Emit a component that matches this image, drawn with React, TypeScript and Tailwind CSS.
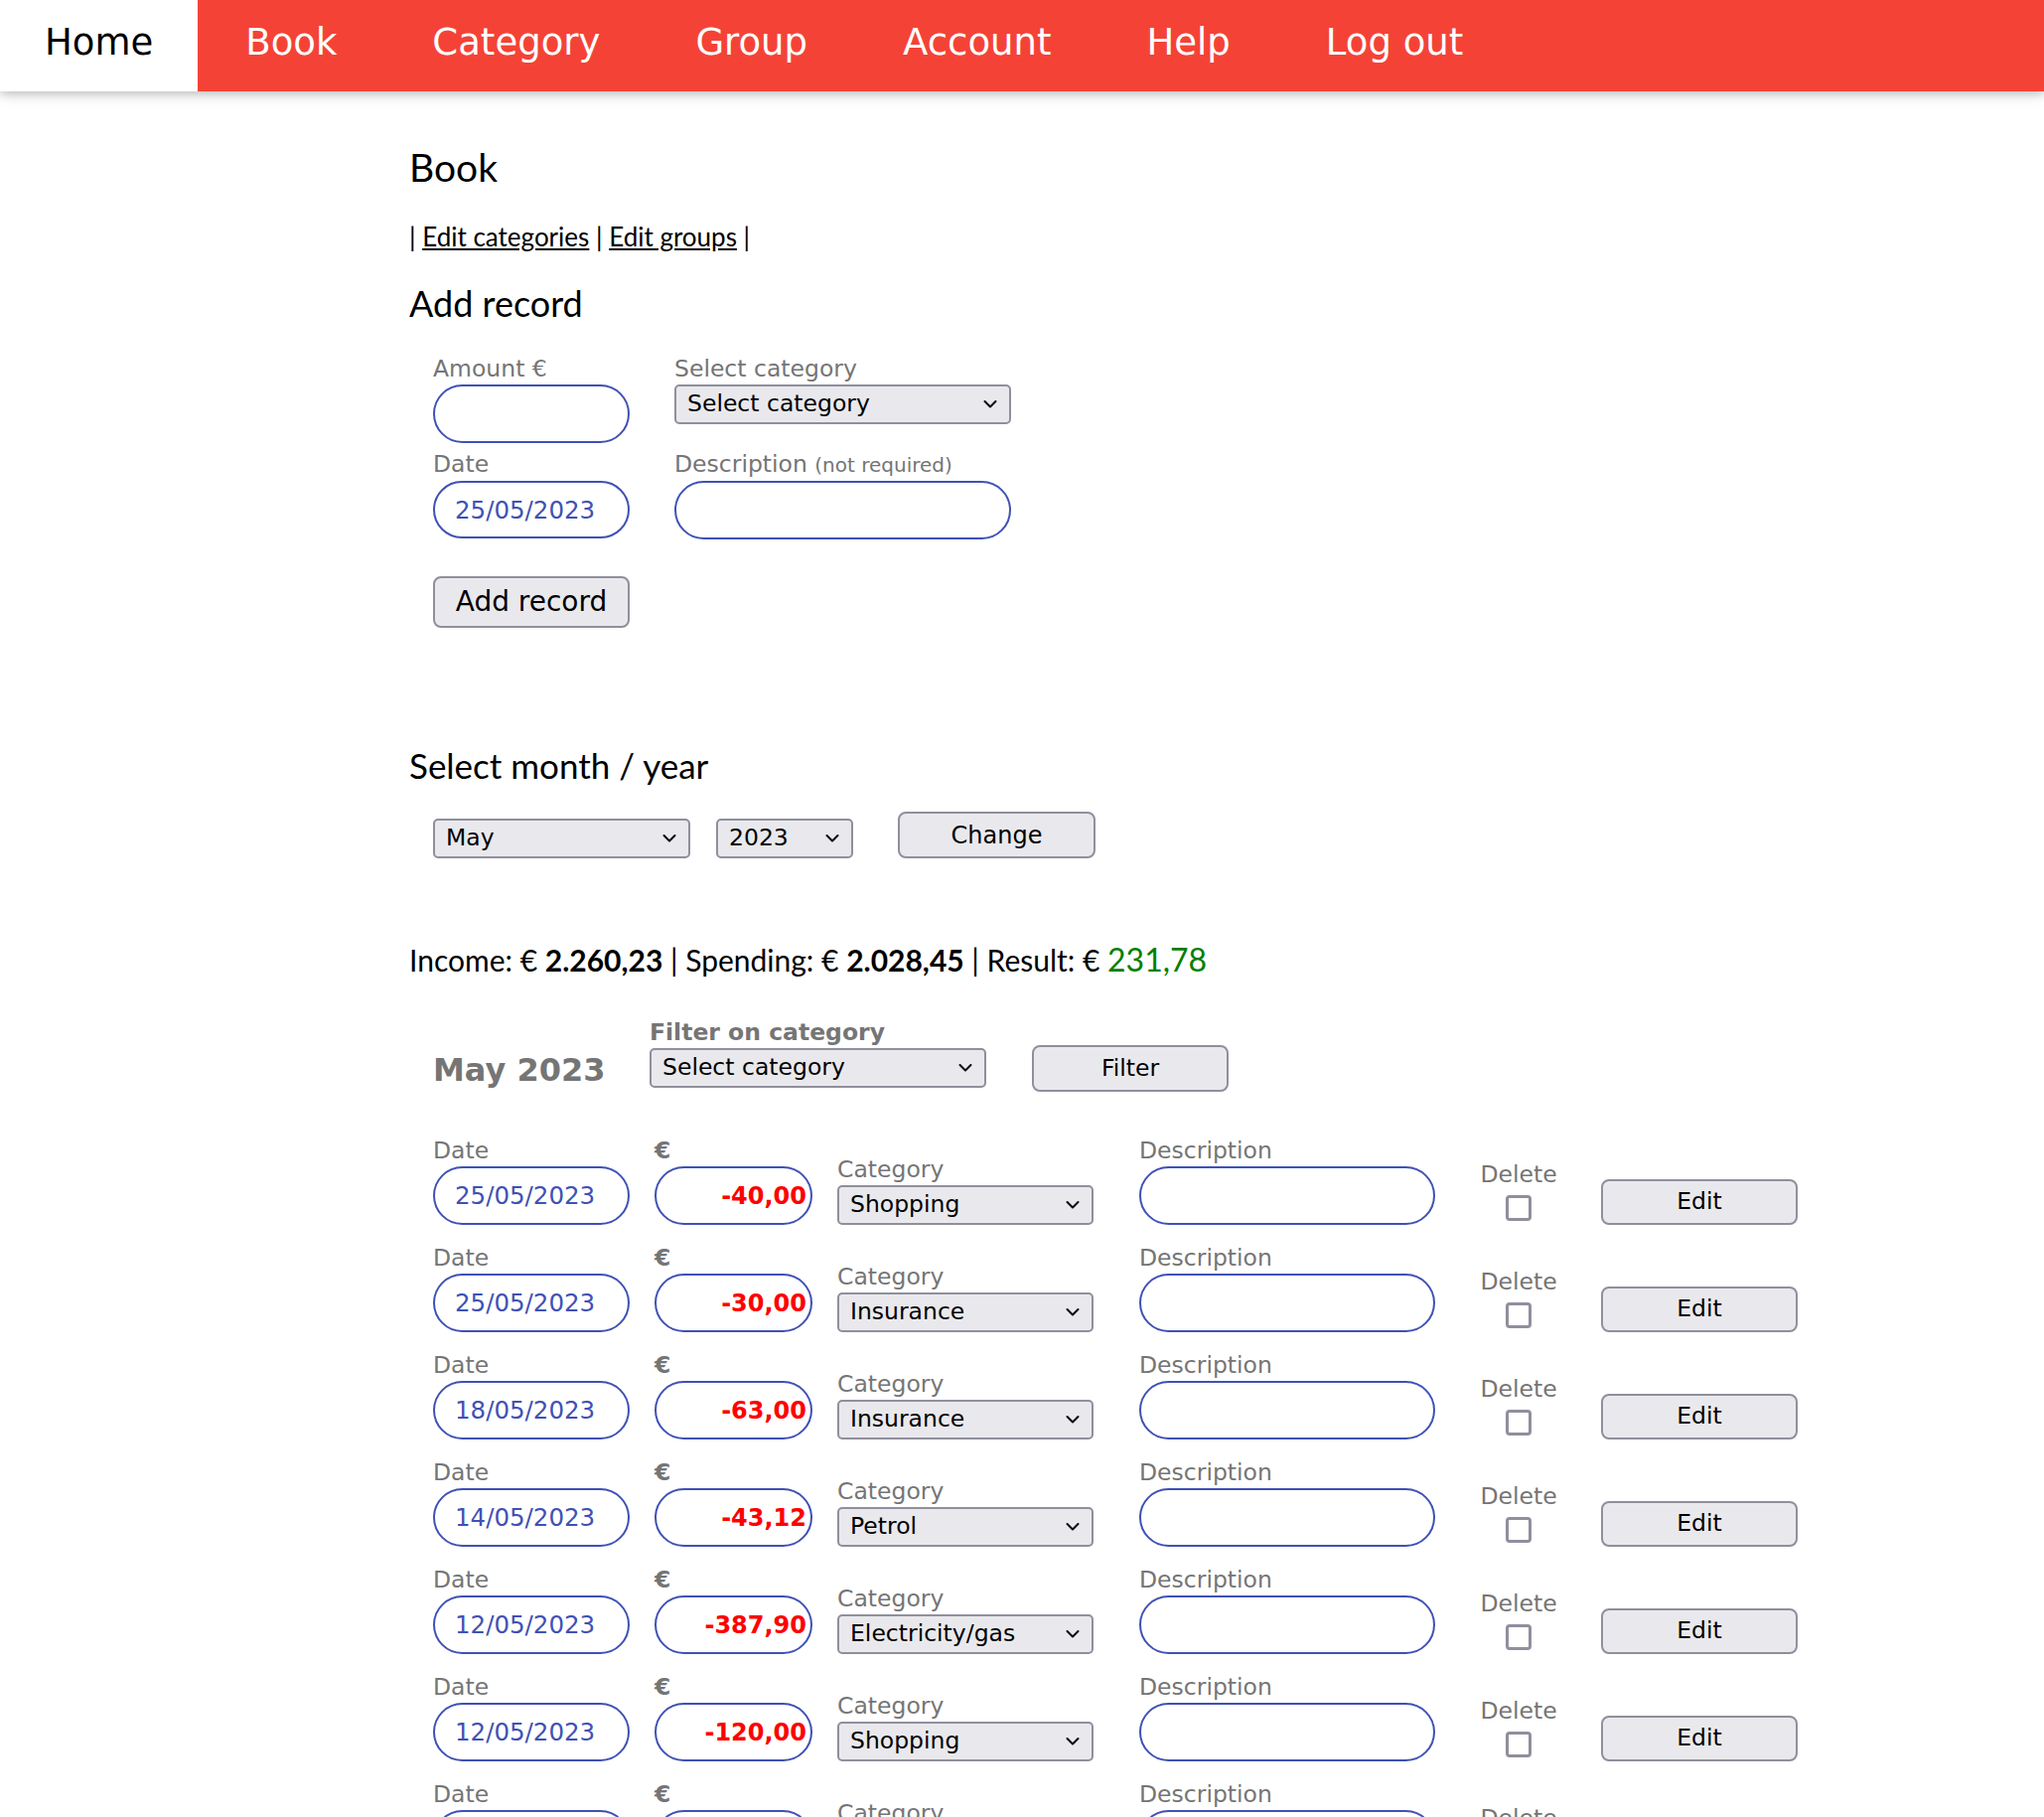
import React from "react";

const DV = "font-['DejaVu_Sans',sans-serif]";

function Chevron() {
  return (
    <svg width="14" height="9" viewBox="0 0 14 9" className="pointer-events-none absolute right-[14px] top-1/2 -translate-y-1/2">
      <path d="M1.5 1.5 L7 7 L12.5 1.5" fill="none" stroke="#000" strokeWidth="2" strokeLinecap="round" strokeLinejoin="round" />
    </svg>
  );
}

function Select({ value, className }: { value: string; className: string }) {
  return (
    <div className={`relative h-[40px] ${className}`}>
      <select
        defaultValue={value}
        className={`${DV} h-full w-full appearance-none rounded-[5px] border-2 border-[#8f8f9d] bg-[#e9e9ed] pl-[11px] text-[23.5px] leading-none text-black outline-none`}
      >
        <option>{value}</option>
      </select>
      <Chevron />
    </div>
  );
}

function Label({ children, className = "" }: { children: React.ReactNode; className?: string }) {
  return <div className={`${DV} text-[23.5px] leading-[28px] text-[#757575] whitespace-nowrap ${className}`}>{children}</div>;
}

function Button({ children, className }: { children: React.ReactNode; className: string }) {
  return (
    <button className={`${DV} rounded-[8px] border-2 border-[#8f8f9d] bg-[#e9e9ed] text-black ${className}`}>{children}</button>
  );
}

const navItems = ["Book", "Category", "Group", "Account", "Help", "Log out"];

const rows = [
  { date: "25/05/2023", amount: "-40,00", cat: "Shopping" },
  { date: "25/05/2023", amount: "-30,00", cat: "Insurance" },
  { date: "18/05/2023", amount: "-63,00", cat: "Insurance" },
  { date: "14/05/2023", amount: "-43,12", cat: "Petrol" },
  { date: "12/05/2023", amount: "-387,90", cat: "Electricity/gas" },
  { date: "12/05/2023", amount: "-120,00", cat: "Shopping" },
  { date: "10/05/2023", amount: "-25,50", cat: "Groceries" },
  { date: "08/05/2023", amount: "-52,30", cat: "Groceries" },
  { date: "01/05/2023", amount: "2.260,23", cat: "Salary" },
];

function RecordRow({ date, amount, cat }: { date: string; amount: string; cat: string }) {
  return (
    <div className="ml-[24px] flex items-end">
      <div className="flex w-[198px] flex-col">
        <Label>Date</Label>
        <input
          readOnly
          defaultValue={date}
          className={`${DV} mt-[2px] h-[59px] w-[198px] rounded-full border-2 border-[#3f51b5] bg-white pl-[20px] text-[24.5px] text-[#3f51b5] outline-none`}
        />
      </div>
      <div className="ml-[25px] flex w-[159px] flex-col">
        <Label className="font-bold">€</Label>
        <input
          readOnly
          defaultValue={amount}
          className={`${DV} mt-[2px] h-[59px] w-[159px] rounded-full border-2 border-[#3f51b5] bg-white pr-[4px] text-right text-[24px] font-bold text-[#ff0000] outline-none`}
        />
      </div>
      <div className="ml-[25px] flex w-[258px] flex-col">
        <Label>Category</Label>
        <Select value={cat} className="mt-[2px] w-[258px]" />
      </div>
      <div className="ml-[46px] flex w-[298px] flex-col">
        <Label>Description</Label>
        <input
          readOnly
          defaultValue=""
          className={`${DV} mt-[2px] h-[59px] w-[298px] rounded-full border-2 border-[#3f51b5] bg-white pl-[20px] text-[24px] outline-none`}
        />
      </div>
      <div className="ml-[46px] flex w-[76px] flex-col items-center pb-[4px]">
        <Label className="text-center">Delete</Label>
        <input
          type="checkbox"
          className="mt-[7px] h-[26px] w-[26px] appearance-none rounded-[4px] border-[3px] border-[#8f8f9d] bg-white"
        />
      </div>
      <Button className="ml-[45px] h-[46px] w-[198px] text-[23.5px]">Edit</Button>
    </div>
  );
}

export default function App() {
  return (
    <div className="min-h-screen bg-white text-black">
      <nav className="flex h-[92px] w-full bg-[#f44336] shadow-[0_3px_8px_0_rgba(0,0,0,0.16),0_3px_15px_0_rgba(0,0,0,0.12)]">
        <a className={`${DV} h-full bg-white px-[45px] pt-[24px] text-[37px] leading-[37px] text-black`}>Home</a>
        {navItems.map((n) => (
          <a key={n} className={`${DV} h-full px-[48px] pt-[24px] text-[37px] leading-[37px] text-white whitespace-nowrap`}>
            {n}
          </a>
        ))}
      </nav>

      <div className="pl-[412px] font-['Lato',sans-serif]">
        <h2 className="mt-[53px] text-[39px] leading-[46px] font-normal">Book</h2>
        <p className="mt-[30px] text-[26px] leading-[34px]">
          | <a className="underline">Edit categories</a> | <a className="underline">Edit groups</a> |
        </p>
        <h3 className="mt-[29px] text-[36px] leading-[42px] font-normal">Add record</h3>

        <div className="ml-[24px] mt-[31px] flex">
          <div className="flex w-[198px] flex-col">
            <Label>Amount €</Label>
            <input
              readOnly
              defaultValue=""
              className={`${DV} mt-[2px] h-[59px] w-[198px] rounded-full border-2 border-[#3f51b5] bg-white pl-[20px] text-[24px] outline-none`}
            />
            <Label className="mt-[7px]">Date</Label>
            <input
              readOnly
              defaultValue="25/05/2023"
              className={`${DV} mt-[3px] h-[58px] w-[198px] rounded-full border-2 border-[#3f51b5] bg-white pl-[20px] text-[24.5px] text-[#3f51b5] outline-none`}
            />
            <Button className="mt-[38px] h-[52px] w-[198px] text-[28px]">Add record</Button>
          </div>
          <div className="ml-[45px] flex w-[339px] flex-col">
            <Label>Select category</Label>
            <Select value="Select category" className="mt-[2px] w-[339px]" />
            <Label className="mt-[26px]">
              Description <span className="text-[20px]">(not required)</span>
            </Label>
            <input
              readOnly
              defaultValue=""
              className={`${DV} mt-[2px] h-[59px] w-[339px] rounded-full border-2 border-[#3f51b5] bg-white pl-[20px] text-[24px] outline-none`}
            />
          </div>
        </div>

        <h3 className="mt-[118px] text-[35px] leading-[41px] font-normal">Select month / year</h3>
        <div className="ml-[24px] mt-[26px] flex items-end">
          <Select value="May" className="w-[259px]" />
          <Select value="2023" className="ml-[26px] w-[138px]" />
          <Button className="ml-[45px] h-[47px] w-[199px] text-[24px]">Change</Button>
        </div>

        <p className="mt-[83px] text-[30px] leading-[37px] whitespace-nowrap">
          Income: € <b>2.260,23</b> | Spending: € <b>2.028,45</b> | Result: €{" "}
          <span className="text-[32px] text-[#008000]">231,78</span>
        </p>

        <div className="ml-[24px] mt-[40px] flex items-start">
          <div className={`${DV} mt-[33px] w-[218px] text-[32px] leading-[38px] font-bold text-[#757575]`}>May 2023</div>
          <div className="flex w-[339px] flex-col">
            <Label className="font-bold">Filter on category</Label>
            <Select value="Select category" className="mt-[2px] w-[339px]" />
          </div>
          <Button className="ml-[46px] mt-[27px] h-[47px] w-[198px] text-[23.5px]">Filter</Button>
        </div>

        <div className="mt-[45px] flex flex-col gap-[19px] pb-[40px]">
          {rows.map((r, i) => (
            <RecordRow key={i} {...r} />
          ))}
        </div>
      </div>
    </div>
  );
}
